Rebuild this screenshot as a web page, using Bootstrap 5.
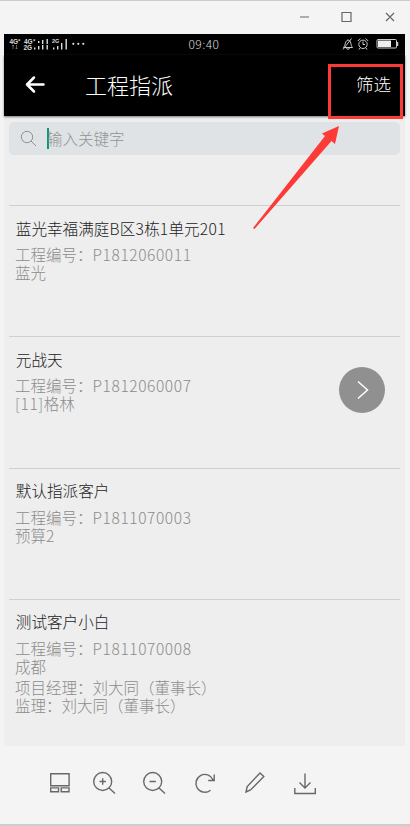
<!DOCTYPE html>
<html lang="zh-CN">
<head>
<meta charset="utf-8">
<meta name="viewport" content="width=device-width, initial-scale=1">
<title>工程指派</title>
<link href="https://cdn.jsdelivr.net/npm/bootstrap@5.3.0/dist/css/bootstrap.min.css" rel="stylesheet">
<style>
body{font-family:"Noto Sans CJK SC",sans-serif;font-weight:300;background:#f4f4f4;overflow:hidden}
svg{display:block;flex:none;fill:none}
.win{width:410px;height:826px;border-top:1px solid #ccc;border-bottom:2px solid #ccc}
.titlebar{height:33px;padding:0 14px 2px 0}
.phone{width:401px;height:712px;margin-left:4px;background:#eee}
.status{height:21px;color:#ddd;background:#000}
.clock{font-size:12px;line-height:19px;left:184.5px;top:0;letter-spacing:.45px}
.appbar{height:61px;background:#000;color:#fff;padding:0 14px 4px 21px;box-shadow:0 1px 2px #777}
.appbar h1{font-size:22px;font-weight:300;line-height:32px;margin-left:40px}
.filter{font-size:17.5px;line-height:26px}
.search{height:33px;margin:6px 5px 0;background:#dfe3e6;border-radius:5px;color:#929292;font-size:15.5px;padding-left:11px}
.caret{width:2px;height:21px;background:#10957c;margin-left:10px;margin-right:-2px}
.entries{margin-top:50px}
.entry{height:131.3px;margin:0 5px;border-top:1px solid #cfcfcf;padding:10.5px 0 0 6px;font-size:15.5px;line-height:18px;color:#8c8c8c}
.entry h2{font-size:15.6px;font-weight:300;line-height:22px;color:#222;margin:0 0 6.5px .8px}
.entry h2 b{font-weight:300;letter-spacing:.4px}
.code{letter-spacing:.6px}
.people{margin-top:3.5px}
.next{width:46px;height:46px;background:#909090;right:15px;top:30px}
.tools{height:77px}
.redmark{left:249px;top:60px}
</style>
<script src="https://cdn.jsdelivr.net/npm/bootstrap@5.3.0/dist/js/bootstrap.bundle.min.js"></script>
</head>
<body>
<div class="win position-relative">
  <div class="titlebar d-flex justify-content-end align-items-center">
    <svg width="98" height="14" viewBox="0 0 98 14" stroke="#666" stroke-width="1.2"><path d="M2 7h9M44 2.500h9v9h-9zM88 3l8 8M96 3l-8 8"/></svg>
  </div>
  <main class="phone d-flex flex-column">
    <div class="status position-relative d-flex justify-content-between">
      <svg width="90" height="21" viewBox="0 0 90 21" font-family="Liberation Sans" font-weight="bold">
        <g fill="#ddd"><text x="5.500" y="9.500" font-size="6.500">4G⁺</text><text x="20" y="9.500" font-size="6.500">4G⁺</text><text x="19.500" y="16" font-size="6.500">2G</text><text x="48" y="9" font-size="5.500">2G</text>
        <path d="M34 7h1.400v2H34zM34 12h1.400v3.500H34zM38 6h1.400v4H38zM38 11h1.400v4.500H38zM42.500 5h1.400v5h-1.400zM42.500 11h1.400v4.500h-1.400zM30 13.500h1.400v2H30zM49 13.500h1.400v2H49zM53 12h1.400v3.500H53zM57 9h1.400v6.500H57zM61.500 5h1.400v10.500h-1.400z"/><circle cx="69.300" cy="9.800" r="1.100"/><circle cx="74.300" cy="9.800" r="1.100"/><circle cx="79.300" cy="9.800" r="1.100"/></g>
        <path d="M9 11v4M7.800 12.200 9 11l1.200 1.200M12.500 11v4m-1.200-1.200 1.200 1.200 1.200-1.200" stroke="#888" stroke-width=".7"/>
      </svg>
      <span class="clock position-absolute">09:40</span>
      <svg width="66" height="21" viewBox="0 0 66 21" stroke="#ccc" stroke-width="1">
        <path d="M4.500 13.500c2-2 1.500-7 4.500-7.500 3.500.300 2.500 5.500 4.500 7.500zM7.500 14c.5 1.800 2.500 1.800 3 0M4 15.500 12.500 4.500"/>
        <circle cx="24" cy="10.300" r="4.200"/><path d="M24 7.500v3h2M18.800 7l2.500-2.500M29.200 7l-2.500-2.500M21 14l-1 1.500M27 14l1 1.500"/>
        <rect x="38" y="5.500" width="19.500" height="8.500" rx="1"/><path d="M39 6.500h13v6.500H39z" fill="#eee" stroke="none"/><path d="M58.500 8v4" stroke-width="1.500"/>
      </svg>
    </div>
    <header class="appbar position-relative d-flex align-items-center">
      <svg width="20" height="20" viewBox="0 -.5 20 20" stroke="#fff" stroke-width="2.500" stroke-linecap="round" stroke-linejoin="round"><path d="M18.500 10H2M9 3 2 10l7 7"/></svg>
      <h1 class="mb-0">工程指派</h1>
      <span class="filter ms-auto">筛选</span>
    </header>
    <div class="search d-flex align-items-center">
      <svg width="17" height="17" viewBox="0 0 17 17" stroke="#929292" stroke-width="1"><circle cx="7" cy="7" r="5.700"/><path d="m11 11 5 5"/></svg>
      <span class="caret"></span><span>输入关键字</span>
    </div>
    <div class="entries">
      <section class="entry"><h2>蓝光幸福满庭<b>B</b>区<b>3</b>栋<b>1</b>单元<b>201</b></h2><div>工程编号：<span class="code">P1812060011</span></div><div>蓝光</div></section>
      <section class="entry position-relative"><h2>元战天</h2><div>工程编号：<span class="code">P1812060007</span></div><div><span class="code">[11]</span>格林</div>
        <span class="next position-absolute rounded-circle d-flex align-items-center justify-content-center"><svg width="14" height="20" viewBox="0 0 14 20" stroke="#fff" stroke-width="1.500"><path d="m3 1.500 9.500 8.500L3 18.500"/></svg></span>
      </section>
      <section class="entry"><h2>默认指派客户</h2><div>工程编号：<span class="code">P1811070003</span></div><div>预算2</div></section>
      <section class="entry"><h2>测试客户小白</h2><div>工程编号：<span class="code">P1811070008</span></div><div>成都</div><div class="people">项目经理：刘大同（董事长）</div><div>监理：刘大同（董事长）</div></section>
    </div>
  </main>
  <footer class="tools">
    <svg width="330" height="77" viewBox="0 746 330 77" stroke="#686868" stroke-width="1.400">
      <path d="M50.700 773.700h18.400v12H50.700zM50.700 787.900h7.800v3.800h-7.800zM61.200 787.900H69v3.800h-7.800z"/>
      <circle cx="102.700" cy="781.500" r="9"/><path d="m109 788 6 5.500M99.500 781.500h6.400M102.700 778.300v6.400"/>
      <circle cx="152.700" cy="781.500" r="9"/><path d="m159 788 6 5.500M149.500 781.500h6.400"/>
      <path d="M213 779.800a8.900 8.900 0 1 0-2.500 10.400M214.200 774.500v6h-6"/>
      <path d="m246 792 1.200-5.500 12.800-13.500 3.800 3.600L250.500 790z"/>
      <path d="M305 773.500v14M299.500 782.500l5.500 5.500 5.500-5.500M294.800 788v5.500h20.500V788"/>
    </svg>
  </footer>
  <svg class="redmark position-absolute" width="161" height="172" viewBox="249 61 161 172">
    <rect x="329.500" y="65.500" width="72" height="52" stroke="#fc3a38" stroke-width="3"/>
    <path d="M253 228 325 136 322 133.500 339 126 335 144 331.500 141 254.500 229z" fill="#fc3a38"/>
  </svg>
</div>
</body>
</html>
